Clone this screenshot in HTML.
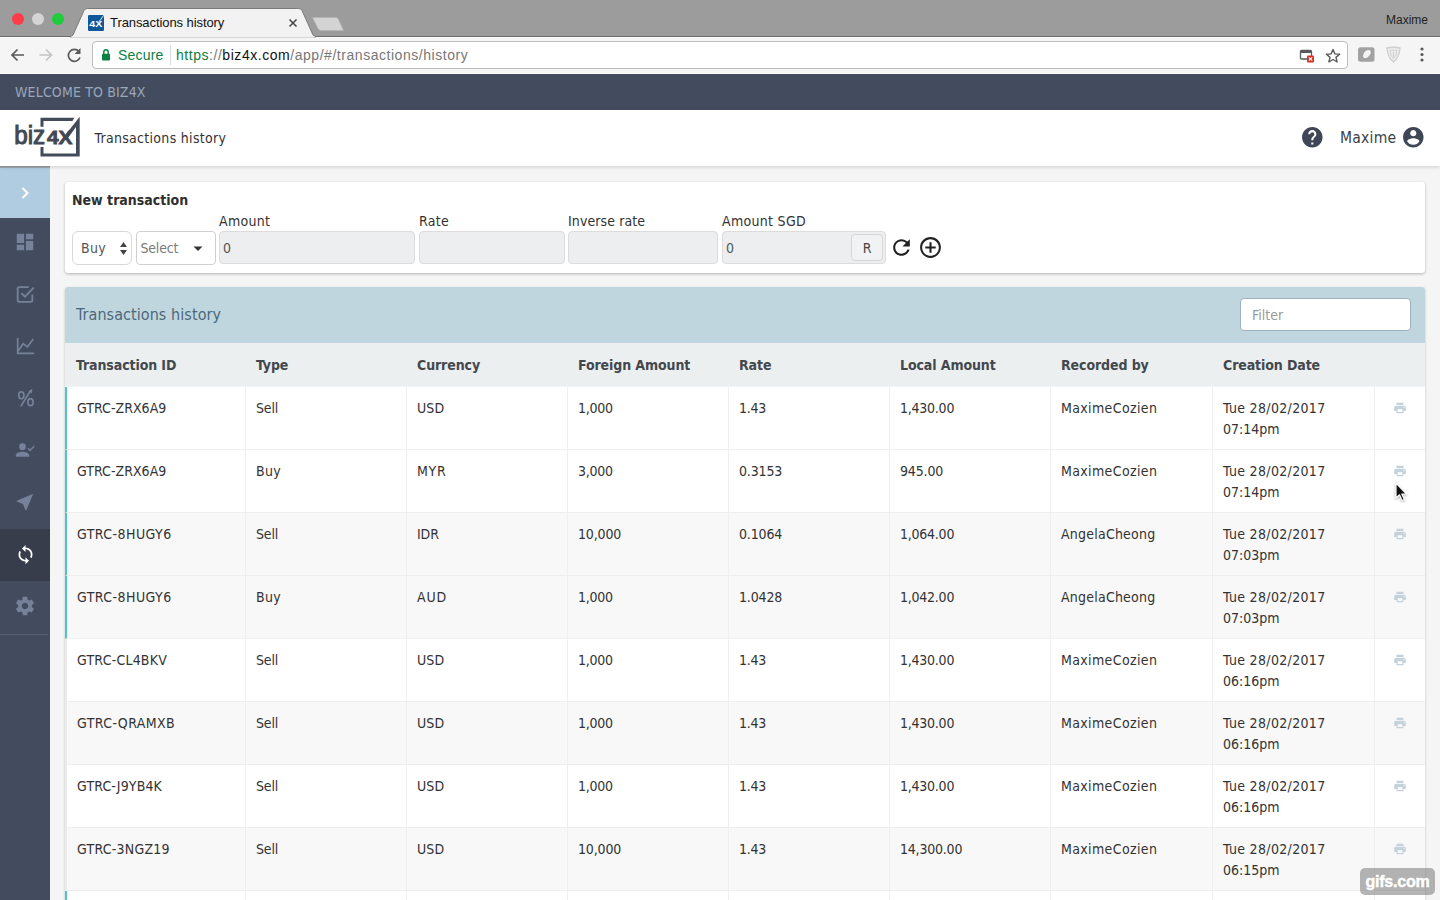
<!DOCTYPE html>
<html lang="en">
<head>
<meta charset="utf-8">
<title>Transactions history</title>
<style>
*{box-sizing:border-box;margin:0;padding:0}
html,body{width:1440px;height:900px;overflow:hidden;background:#f5f5f5}
body{position:relative;font-family:"DejaVu Sans Condensed","Liberation Sans",sans-serif;font-size:14px;color:#333;line-height:21px}
.abs{position:absolute}
/* ---------- browser chrome ---------- */
#titlebar{left:0;top:0;width:1440px;height:36px;background:#9c9c9c;z-index:2}
#toolbar{left:0;top:36px;width:1440px;height:38px;background:#f5f5f5;border-top:1px solid #6c6c6c;box-shadow:inset 0 1px 0 #fdfdfd,inset 0 -1px 0 #fdfdfd}
.chrome{font-family:"Liberation Sans",sans-serif}
.light{border-radius:50%;width:12px;height:12px;top:13px}
#urlbox{left:92px;top:41px;width:1256px;height:28px;background:#fff;border:1px solid #bdbdbd;border-radius:4px}
/* ---------- app ---------- */
#welcome{left:0;top:74px;width:1440px;height:36px;background:#434c5e;color:#9aa6ba;font-size:14px;line-height:36px;padding-left:15px;letter-spacing:.15px}
#header{left:0;top:110px;width:1440px;height:56px;background:#fff;box-shadow:0 1px 4px rgba(0,0,0,.16);z-index:5}
#sidebar{left:0;top:166px;width:50px;height:734px;background:#434c5e}
#sidebar .top{left:0;top:0;width:50px;height:52px;background:#b0cce0}
#sidebar .active{left:0;top:363px;width:50px;height:52px;background:#373d4b}
#sidebar svg{position:absolute}
#card{left:65px;top:182px;width:1360px;height:91px;background:#fff;border-radius:3px;box-shadow:0 1px 3px rgba(0,0,0,.28)}
.lbl{position:absolute;top:29px;font-size:14px;line-height:21px;color:#333;white-space:nowrap}
.inp{position:absolute;top:49px;height:33px;background:#eceeef;border:1px solid #dcdcdc;border-radius:4px;font-size:14px;line-height:33px;color:#555;padding-left:3px}
#panel{left:65px;top:287px;width:1360px;height:620px;background:#fff;border-radius:3px 3px 0 0;box-shadow:0 1px 3px rgba(0,0,0,.2)}
#phead{left:0;top:0;width:1360px;height:56px;background:#c0d6df;border-radius:3px 3px 0 0}
#ptitle{left:11px;top:16px;font-size:16px;line-height:24px;color:#4c6878;white-space:nowrap;letter-spacing:.07px}
#filter{left:1175px;top:11px;width:171px;height:33px;background:#fff;border:1px solid #9fb1be;border-radius:4px;color:#999;font-size:14px;line-height:32px;padding-left:11px}
table{position:absolute;left:0;top:56px;width:1360px;border-collapse:separate;border-spacing:0;table-layout:fixed}
th{height:44px;background:#eceff0;text-align:left;font-weight:700;color:#43484d;letter-spacing:-.1px;border-bottom:1px solid #f3f4f5;padding:2px 0 0 11px;white-space:nowrap;vertical-align:middle}
td{height:63px;vertical-align:top;padding:11px 0 0 10px;border-left:1px solid #efefef;border-bottom:1px solid #efefef;white-space:nowrap;letter-spacing:0}
td:first-child{border-left:2px solid #ebebeb}
tr.t td:first-child{border-left-color:#4fc3d6}
tr.g td{background:#f8f8f8}
td.u{letter-spacing:0}
td.p{padding:0;position:relative}
td.p svg{position:absolute;left:17.5px;top:13.700px}
</style>
</head>
<body>

<!-- ================= browser chrome ================= -->
<div id="titlebar" class="abs chrome">
  <div class="abs light" style="left:12px;background:#fc3d49"></div>
  <div class="abs light" style="left:32px;background:#d4d4d4"></div>
  <div class="abs light" style="left:52px;background:#1fcc3c"></div>
  <svg class="abs" style="left:60px;top:0" width="300" height="38" viewBox="0 0 300 38">
    <path d="M10.500 37 L13 35 L24 10.500 Q25 8.500 27.500 8.500 L238.500 8.500 Q241 8.500 242 10.500 L253 35 L255.500 37 Z" fill="#f2f2f2" stroke="#7a7a7a" stroke-width="1"/>
    <rect x="11.500" y="36" width="243" height="1.500" fill="#f2f2f2"/>
    <path d="M252.500 17.500 L275.500 17.500 Q277.500 17.500 278.500 19.500 L283.500 30.500 L261 30.500 Q259 30.500 258 28.500 Z" fill="#d4d4d4" stroke="#b4b4b4" stroke-width=".8"/>
    <rect x="28" y="15" width="16" height="16" rx="1.200" fill="#10589a"/>
    <path d="M38.500 22.500 L43.800 15.300" stroke="#fff" stroke-width=".9"/>
    <text x="29.300" y="26.700" font-family="Liberation Sans, sans-serif" font-size="9.800" font-weight="700" fill="#fff" textLength="13" lengthAdjust="spacingAndGlyphs">4X</text>
    <path d="M229.500 19.500 L236.500 26.500 M236.500 19.500 L229.500 26.500" stroke="#444" stroke-width="1.500" fill="none"/>
  </svg>
  <div class="abs" style="left:110px;top:15px;font-size:13px;line-height:16px;color:#111;white-space:nowrap;letter-spacing:-.08px">Transactions history</div>
  <div class="abs" style="left:1386px;top:12px;font-size:12px;line-height:16px;color:#222;white-space:nowrap">Maxime</div>
</div>

<div id="toolbar" class="abs chrome"></div>
<svg class="abs" style="left:0;top:38px" width="92" height="36" viewBox="0 0 92 36">
  <path d="M24 17 L12.500 17 M17.500 11.500 L12 17 L17.500 22.500" stroke="#5a5a5a" stroke-width="1.700" fill="none"/>
  <path d="M39.500 17 L51 17 M46 11.500 L51.500 17 L46 22.500" stroke="#c4c4c4" stroke-width="1.700" fill="none"/>
  <path d="M79 13.500 A6 6 0 1 0 80 19.500" stroke="#5a5a5a" stroke-width="1.700" fill="none"/>
  <path d="M80.500 10 L80.500 16 L74.500 16 Z" fill="#5a5a5a"/>
</svg>
<div id="urlbox" class="abs chrome">
  <svg class="abs" style="left:7px;top:5px" width="12" height="16" viewBox="0 0 12 16">
    <rect x="2" y="6.800" width="8" height="6.700" rx="1" fill="#0b8043"/>
    <path d="M3.800 7 V5 A2.200 2.200 0 0 1 8.200 5 V7" stroke="#0b8043" stroke-width="1.400" fill="none"/>
  </svg>
  <div class="abs" style="left:25px;top:4px;font-size:14px;line-height:18px;color:#0b8043;white-space:nowrap;letter-spacing:.2px">Secure</div>
  <div class="abs" style="left:77px;top:3px;width:1px;height:20px;background:#dcdcdc"></div>
  <div class="abs" style="left:83px;top:4px;font-size:14px;line-height:18px;color:#777;white-space:nowrap;letter-spacing:.54px"><span style="color:#0b8043">https</span>://<span style="color:#111">biz4x.com</span>/app/#/transactions/history</div>
  <svg class="abs" style="left:1204px;top:4px" width="46" height="20" viewBox="0 0 46 20">
    <rect x="3.500" y="4.500" width="11" height="8.500" rx="1" fill="none" stroke="#5a5a5a" stroke-width="1.300"/>
    <rect x="3.500" y="4.500" width="11" height="2.500" fill="#5a5a5a"/>
    <rect x="10" y="9.500" width="7" height="7" rx="1" fill="#d93025"/>
    <path d="M11.800 11.300 L15.200 14.700 M15.200 11.300 L11.800 14.700" stroke="#fff" stroke-width="1.100"/>
    <path d="M36 3.500 L37.900 7.900 L42.600 8.300 L39 11.400 L40.100 16 L36 13.500 L31.900 16 L33 11.400 L29.400 8.300 L34.100 7.900 Z" fill="none" stroke="#5a5a5a" stroke-width="1.400" stroke-linejoin="round"/>
  </svg>
</div>
<svg class="abs" style="left:1352px;top:42px" width="84" height="28" viewBox="0 0 84 28">
  <rect x="6" y="5.200" width="16.500" height="14.500" rx="2.500" fill="#a2a2a2"/>
  <path d="M16.500 8 C19.500 8 19.500 11.500 17 14 C15 16.200 12.500 17 11.500 15.500 C10.200 13.500 12.500 8 16.500 8 Z" fill="#f4f4f4"/>
  <path d="M35 6 Q41.500 4.500 48 6 Q47.500 15 41.500 20 Q35.500 15 35 6 Z" fill="#ececec" stroke="#cfcfcf" stroke-width="1.300"/>
  <path d="M38 8.500 Q41.500 7.700 45 8.500 Q44.700 13.500 41.500 16.700 Q38.300 13.500 38 8.500 Z" fill="none" stroke="#d4d4d4" stroke-width="1"/>
  <path d="M41.500 10 V15" stroke="#d0d0d0" stroke-width="1.200"/>
  <circle cx="70" cy="7" r="1.600" fill="#5a5a5a"/><circle cx="70" cy="12.500" r="1.600" fill="#5a5a5a"/><circle cx="70" cy="18" r="1.600" fill="#5a5a5a"/>
</svg>

<!-- ================= app top ================= -->
<div id="welcome" class="abs">WELCOME TO BIZ4X</div>

<div id="header" class="abs">
  <svg class="abs" style="left:0;top:0" width="92" height="56" viewBox="0 0 92 56">
    <path fill="#434a59" d="M43.500 16.700 V10.900 H72.400 L74.400 7.800 H40.500 V16.700 Z"/>
    <path fill="#434a59" d="M79.700 6.800 V46.400 H40.500 V37 H43.500 V43.400 H76 V17 L67.500 28.500 L64.500 26 Z"/>
    <text x="14.200" y="33.700" font-family="Liberation Sans, sans-serif" font-size="25" fill="#434853" stroke="#434853" stroke-width="1" textLength="31" lengthAdjust="spacingAndGlyphs">biz</text>
    <text x="47" y="33.700" font-family="Liberation Sans, sans-serif" font-size="18.500" font-weight="700" fill="#434853" stroke="#434853" stroke-width=".8" textLength="25.500" lengthAdjust="spacingAndGlyphs">4X</text>
  </svg>
  <div class="abs" style="left:94.5px;top:18px;font-size:14px;line-height:21px;color:#333;white-space:nowrap;letter-spacing:.3px">Transactions history</div>
  <svg class="abs" style="left:1299.700px;top:15.200px" width="24.600" height="24.600" viewBox="0 0 24 24"><path fill="#3f4757" d="M12 2C6.480 2 2 6.480 2 12s4.480 10 10 10 10-4.480 10-10S17.520 2 12 2zm1 17h-2v-2h2v2zm2.070-7.750l-.9.920C13.450 12.900 13 13.500 13 15h-2v-.5c0-1.100.45-2.100 1.170-2.830l1.240-1.260c.37-.36.590-.86.590-1.410 0-1.100-.9-2-2-2s-2 .9-2 2H8c0-2.210 1.790-4 4-4s4 1.790 4 4c0 .88-.36 1.680-.93 2.250z"/></svg>
  <div class="abs" style="left:1340px;top:16px;font-size:15.500px;line-height:24px;color:#3a3f4a;white-space:nowrap;letter-spacing:.25px">Maxime</div>
  <svg class="abs" style="left:1400.800px;top:15.200px" width="24.600" height="24.600" viewBox="0 0 24 24"><path fill="#3f4757" d="M12 2C6.480 2 2 6.480 2 12s4.480 10 10 10 10-4.480 10-10S17.520 2 12 2zm0 3c1.660 0 3 1.340 3 3s-1.340 3-3 3-3-1.340-3-3 1.340-3 3-3zm0 14.200c-2.500 0-4.710-1.280-6-3.220.03-1.990 4-3.080 6-3.080 1.990 0 5.970 1.090 6 3.080-1.290 1.940-3.500 3.220-6 3.220z"/></svg>
</div>

<!-- ================= sidebar ================= -->
<div id="sidebar" class="abs">
  <div class="abs top"></div>
  <div class="abs" style="left:0;top:0;width:50px;height:2px;background:linear-gradient(#8a8a8a,#9aa5ae);z-index:6"></div>
  <div class="abs active"></div>
  <div class="abs" style="left:0;top:468px;width:48px;height:1px;background:#566073"></div>
  <!-- chevron -->
  <svg style="left:13px;top:15px" width="24" height="24" viewBox="0 0 24 24"><path d="M9.500 7 L14.500 12 L9.500 17" fill="none" stroke="#fff" stroke-width="2"/></svg>
  <!-- dashboard -->
  <svg style="left:14px;top:65px" width="22" height="22" viewBox="0 0 24 24"><path fill="#76819a" d="M3 13h8V3H3v10zm0 8h8v-6H3v6zm10 0h8V11h-8v10zm0-18v6h8V3h-8z"/></svg>
  <!-- check box -->
  <svg style="left:14px;top:117px" width="22" height="22" viewBox="0 0 24 24"><path fill="none" stroke="#76819a" stroke-width="2" d="M20 12.500 V19 a1.500 1.500 0 0 1 -1.500 1.500 H5.500 A1.500 1.500 0 0 1 4 19 V6 A1.500 1.500 0 0 1 5.500 4.500 H16"/><path fill="none" stroke="#76819a" stroke-width="2" d="M8 11 L12 15 L21.500 5"/></svg>
  <!-- line chart -->
  <svg style="left:14px;top:169px" width="22" height="22" viewBox="0 0 24 24"><path fill="none" stroke="#76819a" stroke-width="1.800" d="M4 3 V20 H22 M4.500 17.500 L10 9.500 L14.500 13 L21 4.500"/></svg>
  <!-- percent -->
  <svg style="left:14px;top:221px" width="22" height="22" viewBox="0 0 24 24"><g fill="none" stroke="#76819a" stroke-width="1.800"><ellipse cx="8" cy="9" rx="2.800" ry="3.800"/><ellipse cx="18" cy="16.500" rx="2.800" ry="3.800"/><path d="M7.500 21 L18 4"/></g><path d="M20 2 L19.500 7 L16 4.500 Z" fill="#76819a"/></svg>
  <!-- person check -->
  <svg style="left:15px;top:274px" width="20" height="20" viewBox="0 0 24 24"><path fill="#76819a" d="M9 12a4 4 0 1 0 0-8 4 4 0 0 0 0 8zm0 2c-2.670 0-8 1.340-8 4v2h16v-2c0-2.660-5.330-4-8-4z"/><path fill="none" stroke="#76819a" stroke-width="1.800" d="M15.500 10 L18 12.500 L23 7.500"/></svg>
  <!-- near me -->
  <svg style="left:14px;top:325px" width="22" height="22" viewBox="0 0 24 24"><path fill="#76819a" d="M21 3L3 10.530v.98l6.840 2.650L12.480 21h.98L21 3z"/></svg>
  <!-- sync -->
  <svg style="left:14.500px;top:377.500px" width="21" height="21" viewBox="0 0 24 24"><path fill="#fff" d="M12 4V1L8 5l4 4V6c3.310 0 6 2.690 6 6 0 1.010-.25 1.970-.7 2.800l1.460 1.460C19.540 15.030 20 13.570 20 12c0-4.420-3.580-8-8-8zm0 14c-3.310 0-6-2.690-6-6 0-1.010.25-1.970.7-2.800L5.240 7.740C4.460 8.970 4 10.430 4 12c0 4.420 3.580 8 8 8v3l4-4-4-4v3z"/></svg>
  <!-- settings -->
  <svg style="left:14px;top:429px" width="22" height="22" viewBox="0 0 24 24"><path fill="#76819a" d="M19.430 12.980c.04-.32.070-.64.070-.98s-.03-.66-.07-.98l2.110-1.650c.19-.15.240-.42.120-.64l-2-3.460c-.12-.22-.39-.3-.61-.22l-2.490 1c-.52-.4-1.080-.73-1.690-.98l-.38-2.650C14.460 2.180 14.250 2 14 2h-4c-.25 0-.46.180-.49.420l-.38 2.650c-.61.250-1.170.59-1.690.98l-2.490-1c-.23-.09-.49 0-.61.220l-2 3.460c-.13.220-.07.490.12.640l2.110 1.650c-.04.320-.07.650-.07.980s.03.660.07.980l-2.110 1.650c-.19.150-.24.420-.12.640l2 3.460c.12.220.39.300.61.220l2.490-1c.52.400 1.080.73 1.690.98l.38 2.650c.03.240.24.420.49.420h4c.25 0 .46-.18.490-.42l.38-2.650c.61-.25 1.170-.59 1.690-.98l2.490 1c.23.090.49 0 .61-.22l2-3.460c.12-.22.070-.49-.12-.64l-2.110-1.650zM12 15.500c-1.930 0-3.500-1.570-3.500-3.500s1.570-3.500 3.500-3.500 3.500 1.570 3.500 3.500-1.570 3.500-3.500 3.500z"/></svg>
</div>

<!-- ================= new transaction card ================= -->
<div id="card" class="abs">
  <div class="abs" style="left:7px;top:8px;font-size:14px;font-weight:700;line-height:21px;color:#2f2f2f;white-space:nowrap">New transaction</div>
  <div class="abs" style="left:7px;top:49px;width:60px;height:34px;background:#fff;border:1px solid #d9d9d9;border-radius:6px;padding-left:8px;line-height:33px;color:#555;letter-spacing:.3px">Buy
    <svg class="abs" style="left:46px;top:9px" width="9" height="15" viewBox="0 0 9 15"><path d="M4.500 1 L8 6 H1 Z M4.500 14 L8 9 H1 Z" fill="#444"/></svg>
  </div>
  <div class="abs" style="left:71px;top:49px;width:80px;height:34px;background:#fff;border:1px solid #cfcfcf;border-radius:4px;padding-left:3.5px;line-height:33px;color:#7b7b7b;letter-spacing:-.2px">Select
    <svg class="abs" style="left:56px;top:14px" width="10" height="6" viewBox="0 0 10 6"><path d="M.500 .500 H9.500 L5 5 Z" fill="#333"/></svg>
  </div>
  <div class="lbl" style="left:154px;letter-spacing:.3px">Amount</div>
  <div class="inp" style="left:154px;width:196px">0</div>
  <div class="lbl" style="left:354px;letter-spacing:.3px">Rate</div>
  <div class="inp" style="left:354px;width:146px"></div>
  <div class="lbl" style="left:503px;letter-spacing:.1px">Inverse rate</div>
  <div class="inp" style="left:503px;width:150px"></div>
  <div class="lbl" style="left:657px;letter-spacing:.3px">Amount SGD</div>
  <div class="inp" style="left:657px;width:164px">0
    <div class="abs" style="left:128px;top:2px;width:32px;height:27px;background:#f1f2f3;border:1px solid #d6d6d6;border-radius:4px;text-align:center;line-height:27.500px;color:#444;padding-left:0">R</div>
  </div>
  <!-- refresh -->
  <svg class="abs" style="left:824px;top:53px" width="25" height="25" viewBox="0 0 24 24"><path fill="#222" d="M17.650 6.350C16.200 4.900 14.210 4 12 4c-4.420 0-7.990 3.580-7.990 8s3.570 8 7.990 8c3.730 0 6.840-2.550 7.730-6h-2.080c-.82 2.330-3.040 4-5.650 4-3.310 0-6-2.690-6-6s2.690-6 6-6c1.660 0 3.140.69 4.220 1.780L13 11h7V4l-2.350 2.350z"/></svg>
  <!-- add circle -->
  <svg class="abs" style="left:852.900px;top:52.700px" width="25" height="25" viewBox="0 0 24 24"><path fill="#222" d="M13 7h-2v4H7v2h4v4h2v-4h4v-2h-4V7zm-1-5C6.480 2 2 6.480 2 12s4.480 10 10 10 10-4.480 10-10S17.520 2 12 2zm0 18c-4.410 0-8-3.590-8-8s3.590-8 8-8 8 3.590 8 8-3.590 8-8 8z"/></svg>
</div>

<!-- ================= table panel ================= -->
<div id="panel" class="abs">
  <div id="phead" class="abs">
    <div id="ptitle" class="abs">Transactions history</div>
    <div id="filter" class="abs">Filter</div>
  </div>
  <table>
    <colgroup><col style="width:180px"><col style="width:161px"><col style="width:161px"><col style="width:161px"><col style="width:161px"><col style="width:161px"><col style="width:162px"><col style="width:162px"><col style="width:51px"></colgroup>
    <thead><tr><th>Transaction ID</th><th>Type</th><th>Currency</th><th>Foreign Amount</th><th>Rate</th><th>Local Amount</th><th>Recorded by</th><th>Creation Date</th><th></th></tr></thead>
    <tbody>
      <tr class="t"><td style="letter-spacing:0.03px">GTRC-ZRX6A9</td><td style="letter-spacing:-0.18px">Sell</td><td style="letter-spacing:0.14px">USD</td><td style="letter-spacing:-0.26px">1,000</td><td style="letter-spacing:-0.28px">1.43</td><td style="letter-spacing:-0.24px">1,430.00</td><td style="letter-spacing:0.36px">MaximeCozien</td><td><span style="letter-spacing:0.33px">Tue 28/02/2017</span><br>07:14pm</td><td class="p"><svg width="14" height="14" viewBox="0 0 24 24"><path fill="#c3d3dc" d="M19 8H5c-1.660 0-3 1.340-3 3v6h4v4h12v-4h4v-6c0-1.660-1.340-3-3-3zm-3 11H8v-5h8v5zm3-7c-.55 0-1-.45-1-1s.45-1 1-1 1 .45 1 1-.45 1-1 1zm-1-9H6v4h12V3z"/></svg></td></tr>
      <tr class="t"><td style="letter-spacing:0.03px">GTRC-ZRX6A9</td><td style="letter-spacing:0.36px">Buy</td><td style="letter-spacing:0.69px">MYR</td><td style="letter-spacing:-0.26px">3,000</td><td style="letter-spacing:-0.15px">0.3153</td><td style="letter-spacing:-0.15px">945.00</td><td style="letter-spacing:0.36px">MaximeCozien</td><td><span style="letter-spacing:0.33px">Tue 28/02/2017</span><br>07:14pm</td><td class="p"><svg width="14" height="14" viewBox="0 0 24 24"><path fill="#c3d3dc" d="M19 8H5c-1.660 0-3 1.340-3 3v6h4v4h12v-4h4v-6c0-1.660-1.340-3-3-3zm-3 11H8v-5h8v5zm3-7c-.55 0-1-.45-1-1s.45-1 1-1 1 .45 1 1-.45 1-1 1zm-1-9H6v4h12V3z"/></svg></td></tr>
      <tr class="t g"><td style="letter-spacing:0.44px">GTRC-8HUGY6</td><td style="letter-spacing:-0.18px">Sell</td><td style="letter-spacing:-0.14px">IDR</td><td style="letter-spacing:-0.15px">10,000</td><td style="letter-spacing:-0.15px">0.1064</td><td style="letter-spacing:-0.24px">1,064.00</td><td style="letter-spacing:0.22px">AngelaCheong</td><td><span style="letter-spacing:0.33px">Tue 28/02/2017</span><br>07:03pm</td><td class="p"><svg width="14" height="14" viewBox="0 0 24 24"><path fill="#c3d3dc" d="M19 8H5c-1.660 0-3 1.340-3 3v6h4v4h12v-4h4v-6c0-1.660-1.340-3-3-3zm-3 11H8v-5h8v5zm3-7c-.55 0-1-.45-1-1s.45-1 1-1 1 .45 1 1-.45 1-1 1zm-1-9H6v4h12V3z"/></svg></td></tr>
      <tr class="t g"><td style="letter-spacing:0.44px">GTRC-8HUGY6</td><td style="letter-spacing:0.36px">Buy</td><td style="letter-spacing:0.83px">AUD</td><td style="letter-spacing:-0.26px">1,000</td><td style="letter-spacing:-0.15px">1.0428</td><td style="letter-spacing:-0.24px">1,042.00</td><td style="letter-spacing:0.22px">AngelaCheong</td><td><span style="letter-spacing:0.33px">Tue 28/02/2017</span><br>07:03pm</td><td class="p"><svg width="14" height="14" viewBox="0 0 24 24"><path fill="#c3d3dc" d="M19 8H5c-1.660 0-3 1.340-3 3v6h4v4h12v-4h4v-6c0-1.660-1.340-3-3-3zm-3 11H8v-5h8v5zm3-7c-.55 0-1-.45-1-1s.45-1 1-1 1 .45 1 1-.45 1-1 1zm-1-9H6v4h12V3z"/></svg></td></tr>
      <tr><td style="letter-spacing:0.21px">GTRC-CL4BKV</td><td style="letter-spacing:-0.18px">Sell</td><td style="letter-spacing:0.14px">USD</td><td style="letter-spacing:-0.26px">1,000</td><td style="letter-spacing:-0.28px">1.43</td><td style="letter-spacing:-0.24px">1,430.00</td><td style="letter-spacing:0.36px">MaximeCozien</td><td><span style="letter-spacing:0.33px">Tue 28/02/2017</span><br>06:16pm</td><td class="p"><svg width="14" height="14" viewBox="0 0 24 24"><path fill="#c3d3dc" d="M19 8H5c-1.660 0-3 1.340-3 3v6h4v4h12v-4h4v-6c0-1.660-1.340-3-3-3zm-3 11H8v-5h8v5zm3-7c-.55 0-1-.45-1-1s.45-1 1-1 1 .45 1 1-.45 1-1 1zm-1-9H6v4h12V3z"/></svg></td></tr>
      <tr class="g"><td style="letter-spacing:0.40px">GTRC-QRAMXB</td><td style="letter-spacing:-0.18px">Sell</td><td style="letter-spacing:0.14px">USD</td><td style="letter-spacing:-0.26px">1,000</td><td style="letter-spacing:-0.28px">1.43</td><td style="letter-spacing:-0.24px">1,430.00</td><td style="letter-spacing:0.36px">MaximeCozien</td><td><span style="letter-spacing:0.33px">Tue 28/02/2017</span><br>06:16pm</td><td class="p"><svg width="14" height="14" viewBox="0 0 24 24"><path fill="#c3d3dc" d="M19 8H5c-1.660 0-3 1.340-3 3v6h4v4h12v-4h4v-6c0-1.660-1.340-3-3-3zm-3 11H8v-5h8v5zm3-7c-.55 0-1-.45-1-1s.45-1 1-1 1 .45 1 1-.45 1-1 1zm-1-9H6v4h12V3z"/></svg></td></tr>
      <tr><td style="letter-spacing:0.14px">GTRC-J9YB4K</td><td style="letter-spacing:-0.18px">Sell</td><td style="letter-spacing:0.14px">USD</td><td style="letter-spacing:-0.26px">1,000</td><td style="letter-spacing:-0.28px">1.43</td><td style="letter-spacing:-0.24px">1,430.00</td><td style="letter-spacing:0.36px">MaximeCozien</td><td><span style="letter-spacing:0.33px">Tue 28/02/2017</span><br>06:16pm</td><td class="p"><svg width="14" height="14" viewBox="0 0 24 24"><path fill="#c3d3dc" d="M19 8H5c-1.660 0-3 1.340-3 3v6h4v4h12v-4h4v-6c0-1.660-1.340-3-3-3zm-3 11H8v-5h8v5zm3-7c-.55 0-1-.45-1-1s.45-1 1-1 1 .45 1 1-.45 1-1 1zm-1-9H6v4h12V3z"/></svg></td></tr>
      <tr class="g"><td style="letter-spacing:0.23px">GTRC-3NGZ19</td><td style="letter-spacing:-0.18px">Sell</td><td style="letter-spacing:0.14px">USD</td><td style="letter-spacing:-0.15px">10,000</td><td style="letter-spacing:-0.28px">1.43</td><td style="letter-spacing:-0.21px">14,300.00</td><td style="letter-spacing:0.36px">MaximeCozien</td><td><span style="letter-spacing:0.33px">Tue 28/02/2017</span><br>06:15pm</td><td class="p"><svg width="14" height="14" viewBox="0 0 24 24"><path fill="#c3d3dc" d="M19 8H5c-1.660 0-3 1.340-3 3v6h4v4h12v-4h4v-6c0-1.660-1.340-3-3-3zm-3 11H8v-5h8v5zm3-7c-.55 0-1-.45-1-1s.45-1 1-1 1 .45 1 1-.45 1-1 1zm-1-9H6v4h12V3z"/></svg></td></tr>
      <tr class="t"><td></td><td></td><td></td><td></td><td></td><td></td><td></td><td></td><td class="p"></td></tr>
    </tbody>
  </table>
</div>

<!-- cursor -->
<svg class="abs" style="left:1393.800px;top:481.400px;filter:drop-shadow(0 1px 1px rgba(0,0,0,.3))" width="14" height="22" viewBox="0 0 14 22"><path d="M2 2 V17 L5.500 13.800 L8 19.500 L10.300 18.500 L7.800 13 H12.500 Z" fill="#111" stroke="#fff" stroke-width="1.200" stroke-linejoin="round"/></svg>

<!-- watermark -->
<div class="abs" style="left:1360px;top:868px;width:75px;height:27px;background:rgba(120,120,120,.55);border-radius:5px;color:#fff;font-family:'Liberation Sans',sans-serif;font-weight:700;font-size:16px;line-height:28px;text-align:center;letter-spacing:-.2px;-webkit-text-stroke:.4px #fff">gifs.com</div>

</body>
</html>
